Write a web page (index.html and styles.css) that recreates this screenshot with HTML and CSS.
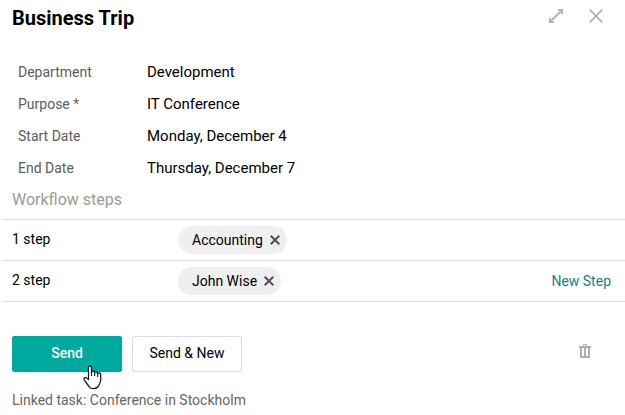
FILE: index.html
```html
<!DOCTYPE html>
<html lang="en">
<head>
<meta charset="utf-8">
<title>Business Trip</title>
<link rel="stylesheet" href="styles.css">
</head>
<body>
<main class="form">
  <header class="header">
    <h1 class="title">Business Trip</h1>
    <div class="window-actions">
      <button class="icon-button" type="button" aria-label="Expand">
        <svg width="14" height="14" viewBox="0 0 14 14"><path d="M8 0h6v6zM0 8v6h6z" fill="#b5b5b5"/><path d="M2.500 11.500l9-9" stroke="#b5b5b5" stroke-width="2"/></svg>
      </button>
      <button class="icon-button" type="button" aria-label="Close">
        <svg width="14" height="14" viewBox="0 0 14 14"><path d="M.7.700l12.600 12.600M13.300.7L.7 13.300" stroke="#b0b0b0" stroke-width="1.700"/></svg>
      </button>
    </div>
  </header>

  <dl class="fields">
    <dt>Department</dt><dd>Development</dd>
    <dt>Purpose <span class="required">*</span></dt><dd>IT Conference</dd>
    <dt>Start Date</dt><dd>Monday, December 4</dd>
    <dt>End Date</dt><dd>Thursday, December 7</dd>
  </dl>

  <section>
    <h2 class="subtitle">Workflow steps</h2>
    <table class="steps">
      <tr>
        <th class="step-name" scope="row">1 step</th>
        <td><span class="chip">Accounting<button class="chip-remove" type="button" aria-label="Remove Accounting"><svg width="10" height="10" viewBox="0 0 10 10"><path d="M.7.700l8.600 8.600M9.300.7L.7 9.300" stroke="#505050" stroke-width="2"/></svg></button></span></td>
        <td class="step-action"></td>
      </tr>
      <tr>
        <th class="step-name" scope="row">2 step</th>
        <td><span class="chip">John Wise<button class="chip-remove" type="button" aria-label="Remove John Wise"><svg width="10" height="10" viewBox="0 0 10 10"><path d="M.7.700l8.600 8.600M9.300.7L.7 9.300" stroke="#505050" stroke-width="2"/></svg></button></span></td>
        <td class="step-action"><a class="new-step" href="#">New Step</a></td>
      </tr>
    </table>
  </section>

  <footer class="footer">
    <div class="buttons">
      <button class="button primary" type="button">Send
        <svg class="pointer" width="19" height="25" viewBox="0 0 19 25"><path d="M5.500 14.500V2.500Q5.500 1 7 1t1.500 1.500V7q.2-1 1.500-1t1.700 1.500Q12 6.800 13.200 7t1.500 1.500q.5-.8 1.700-.5t1.300 1.500V15q0 2-1 3.500t-1 2.500q-2 2.700-5.200 2.700T6 21.500L2 16Q.5 13.700 1.200 13t2-.3z" fill="#fff" stroke="#181c30" stroke-width="1.300" stroke-linejoin="round"/><path d="M8.500 6.500V11M11.600 7.500V11M14.700 8.500V12" fill="none" stroke="#181c30" stroke-width="1.200"/></svg>
      </button>
      <button class="button" type="button">Send &amp; New</button>
      <button class="icon-button delete" type="button" aria-label="Delete">
        <svg width="12" height="15" viewBox="0 0 12 15"><path d="M4.500 2V.5h3V2" fill="none" stroke="#b0b0b0"/><path d="M0 2h12v2H0zM1 4h2v8h6V4h2v10H1zM5 4h2v8H5z" fill="#b0b0b0"/></svg>
      </button>
    </div>
    <p class="linked">Linked task: Conference in Stockholm</p>
  </footer>
</main>
</body>
</html>
```
FILE: styles.css
```css
* { box-sizing: border-box; }

body {
  margin: 0;
  background: #fff;
  color: #000;
  font: 14px/20px Roboto, "Liberation Sans", sans-serif;
}

button {
  padding: 0;
  border: 0;
  background: none;
  color: inherit;
  font: inherit;
  cursor: pointer;
}

svg { display: block; }

.header {
  display: flex;
  align-items: flex-start;
  justify-content: space-between;
  padding: 6px 22px 0 12px;
}

.title {
  margin: 0;
  font-size: 20px;
  font-weight: 700;
  line-height: 24px;
}

.window-actions {
  display: flex;
  gap: 26px;
  padding-top: 3px;
}

.fields {
  display: grid;
  grid-template-columns: 129px 1fr;
  margin: 26px 18px 0;
  line-height: 32px;
}

.fields dt { color: #5c5c5c; }
.fields dd { margin: 0; font-size: 15px; }
.required { color: #96602c; }

.subtitle {
  margin: 0;
  padding: 4px 12px 7px;
  color: #999b94;
  font-size: 16px;
  font-weight: 400;
  line-height: 24px;
}

.steps {
  width: 100%;
  padding-left: 2px;
  border-spacing: 0;
}

.steps th,
.steps td {
  height: 41px;
  padding: 0;
  border-top: 1px solid #dcdcdc;
}

.steps tr:last-child th,
.steps tr:last-child td {
  height: 42px;
  border-bottom: 1px solid #dcdcdc;
}

.steps .step-name {
  width: 176px;
  padding: 0 0 2px 10px;
  font-weight: 400;
  text-align: left;
}

.steps .step-action {
  padding-right: 14px;
  text-align: right;
}

.chip {
  display: inline-flex;
  align-items: center;
  gap: 7px;
  height: 28px;
  padding: 0 7px 0 14px;
  border-radius: 14px;
  background: #efefef;
  vertical-align: middle;
}

.new-step {
  color: #1a7f84;
  text-decoration: none;
}

.footer { padding: 34px 12px 0; }

.buttons {
  display: flex;
  align-items: center;
  gap: 10px;
}

.button {
  position: relative;
  width: 110px;
  height: 36px;
  padding-bottom: 2px;
  border: 1px solid #dcdcdc;
  border-radius: 2px;
}

.primary {
  border-color: #00a99d;
  background: #00a99d;
  color: #fff;
  font-weight: 500;
}

.pointer {
  position: absolute;
  top: 28px;
  left: 70px;
}

.delete {
  margin: 0 22px 6px auto;
}

.linked {
  margin: 18px 0 0;
  color: #666;
}
```
